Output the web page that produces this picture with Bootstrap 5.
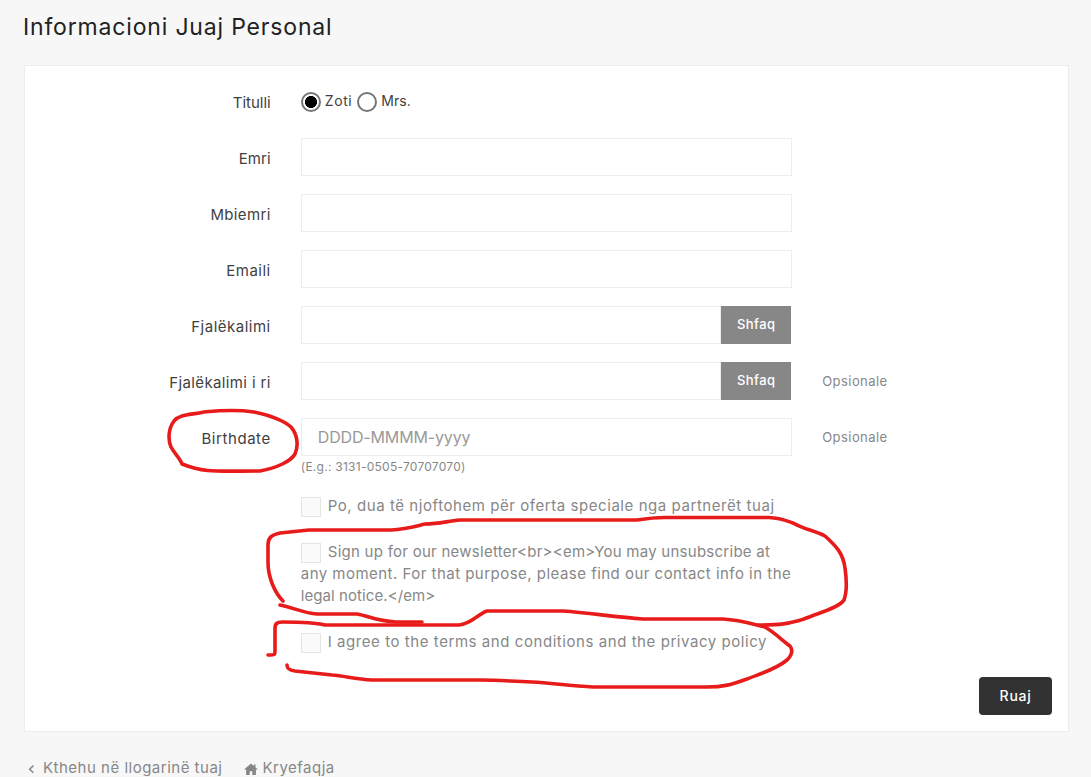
<!DOCTYPE html>
<html lang="sq">
<head>
    <meta charset="UTF-8">
    <meta name="viewport" content="width=device-width, initial-scale=1">
    <title>Informacioni Juaj Personal</title>
    <link rel="stylesheet" href="https://cdn.jsdelivr.net/npm/bootstrap@5.3.0/dist/css/bootstrap.min.css">
    <style>
        body {
            font-family: Inter, "Open Sans", sans-serif;
            font-size: 15px;
            line-height: 22px;
            letter-spacing: .5px;
            color: #878787;
            background: #f7f7f7;
            height: 777px;
            overflow: hidden;
        }
        .page-wrap { padding: 14px 22px 0 24px; }
        .page-title { font-size: 23px; font-weight: 400; line-height: 26px; letter-spacing: .83px; color: #222; margin: 0 0 25px -1px; }
        .info-box { background: #fff; border: 1px solid #ededed; padding: 16px 0; }
        .info-box .row { --bs-gutter-x: 30px; margin: 0 0 18px; }
        .info-box .check-row { margin-bottom: 24px; }
        .field-label { padding-top: 10px; text-align: right; color: #414141; }
        .form-control { height: 38px; font-size: 16px; letter-spacing: -.15px; padding: 6px 16px; border: 1px solid #ededed; border-radius: 0; box-shadow: none; }
        .form-control::placeholder { color: #999; opacity: 1; }
        .btn-show { width: 70px; height: 38px; padding: 0; margin-right: 1px; background: #878787; color: #fff; border: 0; border-radius: 0; font-size: 13px; font-weight: 500; letter-spacing: .4px; }
        .input-group > .btn-show { margin-left: 0 !important; }
        .titles { height: 38px; padding-top: 8px; gap: 5px; color: #414141; font-size: 14px; letter-spacing: .6px; }
        .radio-dot { width: 20px; height: 20px; margin: 2px 4px 0 0; border: 2px solid #767676; border-radius: 50%; background: #fff; appearance: none; }
        .radio-dot:checked { background: radial-gradient(circle, #000 5.7px, #fff 6.3px); }
        .comment { font-size: 13px; letter-spacing: .43px; padding-top: 8px; }
        .hint { font-size: 12px; letter-spacing: .26px; margin-bottom: -1px; }
        .check-sq { appearance: none; width: 20px; height: 20px; margin: 2px 7px 0 0; vertical-align: top; background: #fafafa; border: 1px solid #e5e5e5; }
        .check-label { display: block; white-space: nowrap; }
        .btn-save { width: 73px; height: 38px; margin-right: 16px; padding: 0 0 2px; background: #323232; color: #fff; border: 0; border-radius: 4px; font-size: 14px; font-weight: 500; letter-spacing: .7px; }
        .foot-links { padding: 25px 0 0 4px; }
        .marks { left: 0; top: 0; pointer-events: none; }
        .ls-0 { letter-spacing: 0; }
        .ls-1 { letter-spacing: .08px; }
        .ls-3 { letter-spacing: .26px; }
        .ls-4 { letter-spacing: .37px; }
        .ls-5 { letter-spacing: .475px; }
        .ls-6 { letter-spacing: .56px; }
    </style>
</head>
<body>
    <div class="page-wrap">
        <h1 class="page-title">Informacioni Juaj Personal</h1>

        <form class="info-box">
            <div class="row">
                <div class="col-3 field-label"><span class="ls-0">Titulli</span></div>
                <div class="col-6 d-flex titles">
                    <label class="d-flex"><input class="radio-dot" type="radio" name="title" checked>Zoti</label>
                    <label class="d-flex ls-0"><input class="radio-dot" type="radio" name="title">Mrs.</label>
                </div>
            </div>
            <div class="row">
                <label class="col-3 field-label" for="first"><span class="ls-1">Emri</span></label>
                <div class="col-6"><input class="form-control" id="first" type="text"></div>
            </div>
            <div class="row">
                <label class="col-3 field-label" for="last"><span class="ls-4">Mbiemri</span></label>
                <div class="col-6"><input class="form-control" id="last" type="text"></div>
            </div>
            <div class="row">
                <label class="col-3 field-label" for="email"><span>Emaili</span></label>
                <div class="col-6"><input class="form-control" id="email" type="email"></div>
            </div>
            <div class="row">
                <label class="col-3 field-label" for="pass"><span>Fjalëkalimi</span></label>
                <div class="col-6">
                    <div class="input-group">
                        <input class="form-control" id="pass" type="password">
                        <button class="btn btn-show" type="button">Shfaq</button>
                    </div>
                </div>
            </div>
            <div class="row">
                <label class="col-3 field-label" for="newpass"><span class="ls-4">Fjalëkalimi i ri</span></label>
                <div class="col-6">
                    <div class="input-group">
                        <input class="form-control" id="newpass" type="password">
                        <button class="btn btn-show" type="button">Shfaq</button>
                    </div>
                </div>
                <div class="col-3 comment">Opsionale</div>
            </div>
            <div class="row">
                <label class="col-3 field-label" for="birth"><span class="ls-6">Birthdate</span></label>
                <div class="col-6">
                    <input class="form-control" id="birth" type="text" placeholder="DDDD-MMMM-yyyy">
                    <div class="hint">(E.g.: 3131-0505-70707070)</div>
                </div>
                <div class="col-3 comment">Opsionale</div>
            </div>

            <!-- Consent checkboxes -->
            <div class="row check-row">
                <div class="col-6 offset-3">
                    <label class="check-label ls-6"><input class="check-sq" type="checkbox">Po, dua të njoftohem për oferta speciale nga partnerët tuaj</label>
                </div>
            </div>
            <div class="row check-row">
                <div class="col-6 offset-3">
                    <label class="check-label"><input class="check-sq" type="checkbox"><span class="ls-3">Sign up for our newsletter&lt;br&gt;&lt;em&gt;You may unsubscribe at</span><br><span class="ls-5">any moment. For that purpose, please find our contact info in the</span><br><span class="ls-1">legal notice.&lt;/em&gt;</span></label>
                </div>
            </div>
            <div class="row check-row">
                <div class="col-6 offset-3">
                    <label class="check-label ls-6"><input class="check-sq" type="checkbox">I agree to the terms and conditions and the privacy policy</label>
                </div>
            </div>

            <div class="d-flex justify-content-end">
                <button class="btn btn-save" type="submit">Ruaj</button>
            </div>
        </form>

        <div class="foot-links d-flex">
            <div class="d-flex">
                <svg class="me-2" width="7" height="22" viewBox="0 0 7 22"><path d="M5.4 8.6 1.6 12.2 5.4 15.8" fill="none" stroke="#878787" stroke-width="1.5"/></svg>
                <span>Kthehu në llogarinë tuaj</span>
            </div>
            <div class="d-flex ms-3 ps-1">
                <svg class="me-1" width="16" height="22" viewBox="-2 0 16 22"><path d="M7 6.6 0 12.6h2.1V18h3.6v-3.8h2.6V18h3.600v-5.400H14L11.500 10.400V7.400H9.800v1.500z" fill="#878787"/></svg>
                <span>Kryefaqja</span>
            </div>
        </div>
    </div>

    <!-- Hand-drawn marker strokes over the form -->
    <svg class="marks position-absolute" width="1091" height="777" viewBox="0 0 1091 777" fill="none" stroke="#e81b1b" stroke-width="3.6" stroke-linecap="round" stroke-linejoin="round">
        <path d="M182 464C205 473 216 471 260 471C277 468 291 461 295 454C299 445 297 434 291 427C283 420 268 415 254 412C233 409 215 411 204 412C190 415 180 414 174 421C168 429 168 440 171 447C174 453 180 458 182 464"/>
        <path d="M283 601C275 593 268 578 268 562V545C268 538 271 535 280 533L309 530H391C407 529 416 526 425 524C440 524 447 521 460 520H637C650 518 655 517.500 665 517.500H769C781 518 787 521 793 523C803 529 816 531 825 536C836 546 843 553 845 568C847 582 847 592 844 600C839 608 818 613 804 619C788 624 780 625 759 625"/>
        <path d="M280 605C295 608 303 613 317 614H357C369 616 376 621 396 622H422"/>
        <path d="M268 655C275 655 275 655 275 651V629C275 624 276 622 283 622C298 622 313 622 325 625H459C471 624 478 614 487 611H563C590 613 615 617 643 619H723C741 620 752 624 765 627C774 632 783 641 790 646C793 650 792 655 787 660C775 670 759 674 747 679C735 683 727 687 707 687H593C570 686 552 683 532 682C507 681 500 680 480 680H372C355 679 345 676 332 675L295 671C288 670 287 668 287 665"/>
    </svg>
    <script src="https://cdn.jsdelivr.net/npm/bootstrap@5.3.0/dist/js/bootstrap.bundle.min.js"></script>
</body>
</html>
